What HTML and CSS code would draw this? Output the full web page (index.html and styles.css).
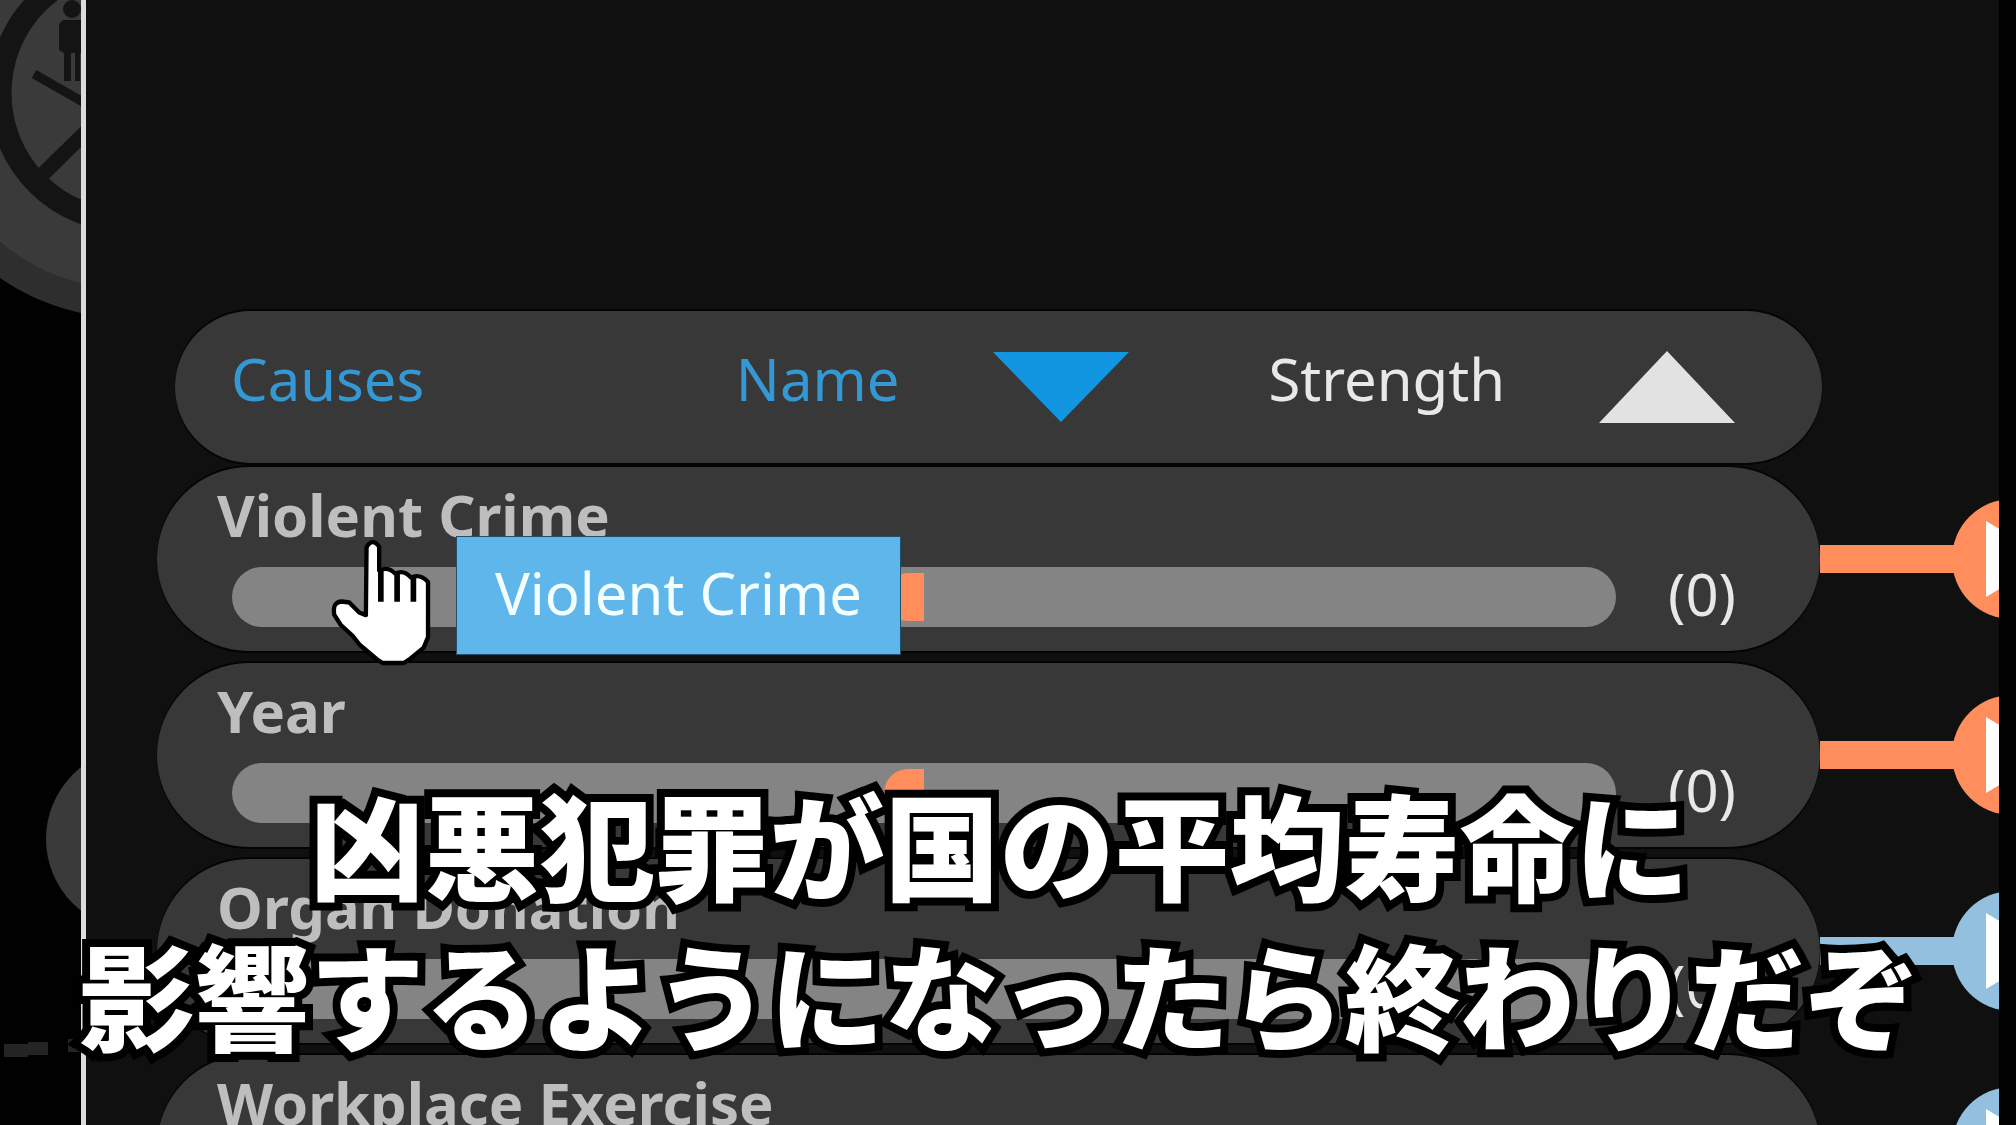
FILE: index.html
```html
<!DOCTYPE html>
<html lang="en">
<head>
  <meta charset="UTF-8">
  <meta name="viewport" content="width=device-width, initial-scale=1.0">
  <title>Causes</title>
  <link rel="stylesheet" href="styles.css">
</head>
<body>

<!-- Dimmed map behind the panel -->
<svg class="map" width="400" height="1125" viewBox="0 0 400 1125" aria-hidden="true">
  <circle cx="128" cy="93" r="225" fill="#2e2e2e"/>
  <circle cx="128" cy="93" r="196" fill="#3a3a3a"/>
  <circle cx="128" cy="93" r="128" fill="none" stroke="#141414" stroke-width="23"/>
  <g fill="#141414">
    <circle cx="72" cy="9" r="9"/>
    <path d="M63 20H86V53H80V81H75V53H71V81H64V53L59 50V24Z"/>
  </g>
  <path d="M34 74L90 106" stroke="#141414" stroke-width="9"/>
  <path d="M42 175L212 8" stroke="#141414" stroke-width="15"/>
  <circle cx="137" cy="839" r="91" fill="#3a3a3a"/>
  <path d="M4 1044H28V1042H48V1055H28V1057H4ZM68 1039H90V1052H68Z" fill="#242424"/>
</svg>

<main class="panel">
  <div class="header">
    <span class="header-title">Causes</span>
    <div class="sorts">
      <button class="sort active" type="button">
        <span>Name</span>
        <svg width="136" height="72" viewBox="0 0 136 72" aria-hidden="true"><path d="M0 1H136L68 71Z" fill="#1296e2"/></svg>
      </button>
      <button class="sort" type="button">
        <span>Strength</span>
        <svg width="136" height="72" viewBox="0 0 136 72" aria-hidden="true"><path d="M0 72H136L68 0Z" fill="#e2e2e2"/></svg>
      </button>
    </div>
  </div>

  <ul class="causes">
    <li class="cause">
      <div class="card">
        <h2>Violent Crime</h2>
        <div class="strength">
          <div class="track"><div class="fill"></div></div>
          <span class="value">(0)</span>
        </div>
        <div class="tooltip" role="tooltip">Violent Crime</div>
        <svg class="pointer" width="103" height="133" viewBox="60 45 310 400" aria-hidden="true">
          <path d="M170 82Q187 52 208 80V152Q234 138 256 161Q282 148 304 173Q330 160 355 186V352L342 384L298 420L282 430H218L200 418L150 376L128 348L92 315L73 285Q66 246 96 245L118 248L148 278L168 286Z" fill="#fff" stroke="#000" stroke-width="13" stroke-linejoin="round"/>
          <path d="M213 150V246M262 162V246M311 174V246" stroke="#000" stroke-width="17"/>
        </svg>
      </div>
      <div class="link negative">
        <span class="line"></span>
        <span class="node"><svg width="64" height="76" viewBox="0 0 64 76" aria-hidden="true"><path d="M0 0L64 38L0 76Z" fill="#fff"/></svg></span>
      </div>
    </li>

    <li class="cause">
      <div class="card">
        <h2>Year</h2>
        <div class="strength">
          <div class="track"><div class="fill"></div></div>
          <span class="value">(0)</span>
        </div>
      </div>
      <div class="link negative">
        <span class="line"></span>
        <span class="node"><svg width="64" height="76" viewBox="0 0 64 76" aria-hidden="true"><path d="M0 0L64 38L0 76Z" fill="#fff"/></svg></span>
      </div>
    </li>

    <li class="cause">
      <div class="card">
        <h2>Organ Donation</h2>
        <div class="strength">
          <div class="track"></div>
          <span class="value">(0)</span>
        </div>
      </div>
      <div class="link positive">
        <span class="line"></span>
        <span class="node"><svg width="64" height="76" viewBox="0 0 64 76" aria-hidden="true"><path d="M0 0L64 38L0 76Z" fill="#fff"/></svg></span>
      </div>
    </li>

    <li class="cause">
      <div class="card">
        <h2>Workplace Exercise</h2>
      </div>
      <div class="link positive">
        <span class="line"></span>
        <span class="node"><svg width="64" height="76" viewBox="0 0 64 76" aria-hidden="true"><path d="M0 0L64 38L0 76Z" fill="#fff"/></svg></span>
      </div>
    </li>
  </ul>
</main>

<!-- Subtitles -->
<p class="caption" lang="ja">凶悪犯罪が国の平均寿命に<br>影響するようになったら終わりだぞ</p>

</body>
</html>
```

FILE: styles.css
```css
* {
  box-sizing: border-box;
}

body {
  margin: 0;
  height: 100vh;
  overflow: hidden;
  position: relative;
  background-color: #010101;
  font-family: "Noto Sans", "Noto Sans CJK JP", sans-serif;
  font-size: 58px;
  line-height: 60px;
  color: #e8e8e8;
}

svg {
  display: block;
  flex: none;
}

.map {
  position: absolute;
  left: 0;
  top: 0;
}

.panel {
  position: relative;
  height: 100%;
  margin: 0 17px 0 81px;
  padding: 311px 0 0 71px;
  overflow: hidden;
  background-color: rgba(16, 16, 16, 0.99);
  border-left: 5px solid #dcdcdc;
}

/* Header with the sort buttons */
.header {
  display: flex;
  align-items: center;
  height: 152px;
  margin: 0 177px 4px 18px;
  padding: 0 87px 0 56px;
  border-radius: 76px;
  background-color: #383838;
  box-shadow: 0 -2px 0 #040404, 0 2px 0 #040404;
}

.header span {
  padding-bottom: 16px;
}

.header-title {
  margin-right: auto;
  color: #3498d4;
}

.sorts {
  display: flex;
  gap: 139px;
}

.sort {
  display: flex;
  align-items: center;
  gap: 94px;
  padding: 0;
  border: none;
  background: none;
  color: #e8e8e8;
  font: inherit;
  cursor: pointer;
}

.sort.active {
  color: #3498d4;
}

/* List of causes */
.causes {
  display: flex;
  flex-direction: column;
  gap: 12px;
  margin: 0;
  padding: 0;
  list-style: none;
}

.cause {
  display: flex;
  align-items: center;
}

.card {
  position: relative;
  flex: 1;
  height: 184px;
  padding: 18px 84px 0 60px;
  border-radius: 92px;
  background-color: #383838;
  box-shadow: 0 -2px 0 #040404, 0 2px 0 #040404;
}

.card h2 {
  margin: 0 0 22px;
  font-size: 58px;
  font-weight: 700;
  color: #bebebe;
}

.strength {
  display: flex;
  gap: 52px;
  padding-left: 15px;
}

.track {
  flex: 1;
  height: 60px;
  padding: 6px 0;
  border-radius: 30px;
  background-color: #848484;
}

.fill {
  width: 40px;
  height: 48px;
  margin-left: calc(50% - 40px);
  border-radius: 28px 0 0 28px;
  background-color: #ff8e5c;
}

.value {
  line-height: 54px;
}

/* Connector at the right of each card */
.link {
  position: relative;
  display: flex;
  align-items: center;
  width: 179px;
  height: 120px;
}

.negative {
  color: #ff8e5c;
}

.positive {
  color: #92c0de;
}

.line {
  flex: none;
  width: 140px;
  height: 28px;
  background-color: currentColor;
}

.node {
  display: flex;
  align-items: center;
  flex: none;
  width: 120px;
  height: 120px;
  margin-left: -8px;
  padding-left: 34px;
  border-radius: 50%;
  background-color: currentColor;
}

.tooltip {
  position: absolute;
  z-index: 1;
  left: 300px;
  top: 70px;
  padding: 26px 38px 31px 38px;
  background-color: #5eb6ea;
  box-shadow: 0 0 0 1px #24506c;
  color: #f4ffff;
  white-space: nowrap;
}

.pointer {
  position: absolute;
  z-index: 1;
  left: 173px;
  top: 68px;
}

.caption {
  position: absolute;
  z-index: 2;
  left: 0;
  right: 17px;
  bottom: 58px;
  margin: 0;
  font-family: "Noto Sans CJK JP", sans-serif;
  font-size: 115px;
  font-weight: 900;
  line-height: 150px;
  text-align: center;
  white-space: nowrap;
  color: #fff;
  -webkit-text-stroke: 16px #000;
  paint-order: stroke fill;
}
```
